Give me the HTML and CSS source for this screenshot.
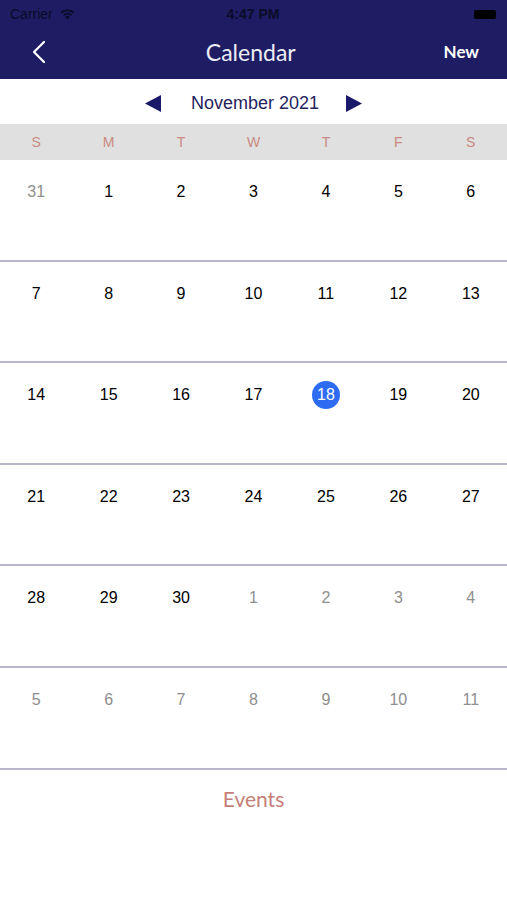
FILE: index.html
```html
<!DOCTYPE html>
<html lang="en">
  <head>
    <meta charset="UTF-8" />
    <meta name="viewport" content="width=device-width, initial-scale=1.0" />
    <title>Calendar</title>
    <link rel="stylesheet" href="styles.css">
  </head>
  <body>
    <div class="top-bar">
      <div class="status-bar">
        <div class="status-left">
          <span>Carrier</span>
          <svg class="wifi" width="17" height="12" viewBox="0 0 16 12">
            <path d="M8 11.5 L5.6 8.9 A3.5 3.5 0 0 1 10.4 8.9 Z" fill="#0b0b2a" />
            <path d="M3.4 6.6 A6.6 6.6 0 0 1 12.6 6.6 L11.2 8 A4.7 4.7 0 0 0 4.8 8 Z" fill="#0b0b2a" />
            <path d="M1 4.2 A10 10 0 0 1 15 4.2 L13.6 5.6 A8 8 0 0 0 2.4 5.6 Z" fill="#0b0b2a" />
          </svg>
        </div>
        <div class="status-time">4:47 PM</div>
        <div class="status-right">
          <div class="battery"></div>
        </div>
      </div>
      <div class="nav-bar">
        <svg class="back" width="14" height="24" viewBox="0 0 14 24">
          <path d="M12 2 L2 12 L12 22" fill="none" stroke="#fff" stroke-width="2.2" stroke-linecap="round" stroke-linejoin="round" />
        </svg>
        <div class="nav-title">Calendar</div>
        <div class="nav-new">New</div>
      </div>
    </div>

    <div class="month-row">
      <svg class="arrow" width="16" height="17" viewBox="0 0 16 17">
        <path d="M16 0 L16 17 L0 8.5 Z" fill="#1a1868" />
      </svg>
      <span class="month-name">November 2021</span>
      <svg class="arrow" width="16" height="17" viewBox="0 0 16 17">
        <path d="M0 0 L0 17 L16 8.5 Z" fill="#1a1868" />
      </svg>
    </div>

    <div class="weekdays">
      <span>S</span><span>M</span><span>T</span><span>W</span><span>T</span><span>F</span><span>S</span>
    </div>

    <div class="month-grid">
      <div class="week">
        <div class="day other">31</div>
        <div class="day">1</div>
        <div class="day">2</div>
        <div class="day">3</div>
        <div class="day">4</div>
        <div class="day">5</div>
        <div class="day">6</div>
      </div>
      <div class="week">
        <div class="day">7</div>
        <div class="day">8</div>
        <div class="day">9</div>
        <div class="day">10</div>
        <div class="day">11</div>
        <div class="day">12</div>
        <div class="day">13</div>
      </div>
      <div class="week">
        <div class="day">14</div>
        <div class="day">15</div>
        <div class="day">16</div>
        <div class="day">17</div>
        <div class="day"><span class="today">18</span></div>
        <div class="day">19</div>
        <div class="day">20</div>
      </div>
      <div class="week">
        <div class="day">21</div>
        <div class="day">22</div>
        <div class="day">23</div>
        <div class="day">24</div>
        <div class="day">25</div>
        <div class="day">26</div>
        <div class="day">27</div>
      </div>
      <div class="week">
        <div class="day">28</div>
        <div class="day">29</div>
        <div class="day">30</div>
        <div class="day other">1</div>
        <div class="day other">2</div>
        <div class="day other">3</div>
        <div class="day other">4</div>
      </div>
      <div class="week">
        <div class="day other">5</div>
        <div class="day other">6</div>
        <div class="day other">7</div>
        <div class="day other">8</div>
        <div class="day other">9</div>
        <div class="day other">10</div>
        <div class="day other">11</div>
      </div>
    </div>

    <div class="events">Events</div>
  </body>
</html>
```

FILE: styles.css
```css
:root {
  --navy: #1e1d64;
  --line: #b9b8cb;
  --rose: #c98a82;
  --header-bg: #e0e0e0;
  --muted: #8e8e8e;
  --today: #2d6cf2;
}

body {
  margin: 0;
  padding: 0;
  background-color: #fff;
  font-family: "Liberation Sans", Arial, sans-serif;
  color: #000;
}

.top-bar {
  background-color: var(--navy);
  height: 79px;
  display: flex;
  flex-direction: column;
}

.status-bar {
  height: 28px;
  display: flex;
  align-items: center;
  padding: 0 10px;
  color: #0b0b2a;
  font-size: 14px;
}

.status-left {
  flex: 1;
  display: flex;
  align-items: center;
  gap: 6px;
}

.status-time {
  font-weight: bold;
  font-size: 14px;
}

.status-right {
  flex: 1;
  display: flex;
  justify-content: flex-end;
  padding-right: 1px;
}

.battery {
  width: 22px;
  height: 9px;
  border-radius: 2px;
  background-color: #000;
}

.nav-bar {
  flex: 1;
  display: flex;
  align-items: center;
  padding: 0 28px 4px 32px;
}

.back {
  width: 14px;
}

.nav-title {
  flex: 1;
  text-align: center;
  color: #ececf4;
  font-family: "Lato", "Open Sans", sans-serif;
  font-size: 23px;
  padding-left: 12px;
}

.nav-new {
  color: #fff;
  font-family: "Lato", sans-serif;
  font-weight: bold;
  font-size: 17px;
}

.month-row {
  height: 45px;
  display: flex;
  align-items: center;
  justify-content: center;
  padding-top: 3px;
  box-sizing: border-box;
}

.month-name {
  font-size: 18px;
  margin: 0 27px 0 30px;
  color: #25235e;
}

.weekdays {
  height: 36px;
  background-color: var(--header-bg);
  display: grid;
  grid-template-columns: repeat(7, 1fr);
  align-items: center;
  text-align: center;
  color: var(--rose);
  font-size: 14px;
}

.week {
  height: 99.6px;
  display: grid;
  grid-template-columns: repeat(7, 1fr);
  border-bottom: 2px solid var(--line);
}

.day {
  text-align: center;
  font-size: 16px;
  padding-top: 23px;
  line-height: 18px;
}

.day.other {
  color: var(--muted);
}

.today {
  display: inline-flex;
  align-items: center;
  justify-content: center;
  width: 28px;
  height: 28px;
  margin-top: -5px;
  border-radius: 50%;
  background-color: var(--today);
  color: #fff;
}

.events {
  text-align: center;
  color: #c57f78;
  font-family: "Lato", "Open Sans", sans-serif;
  font-size: 21px;
  padding-top: 16px;
}
```
